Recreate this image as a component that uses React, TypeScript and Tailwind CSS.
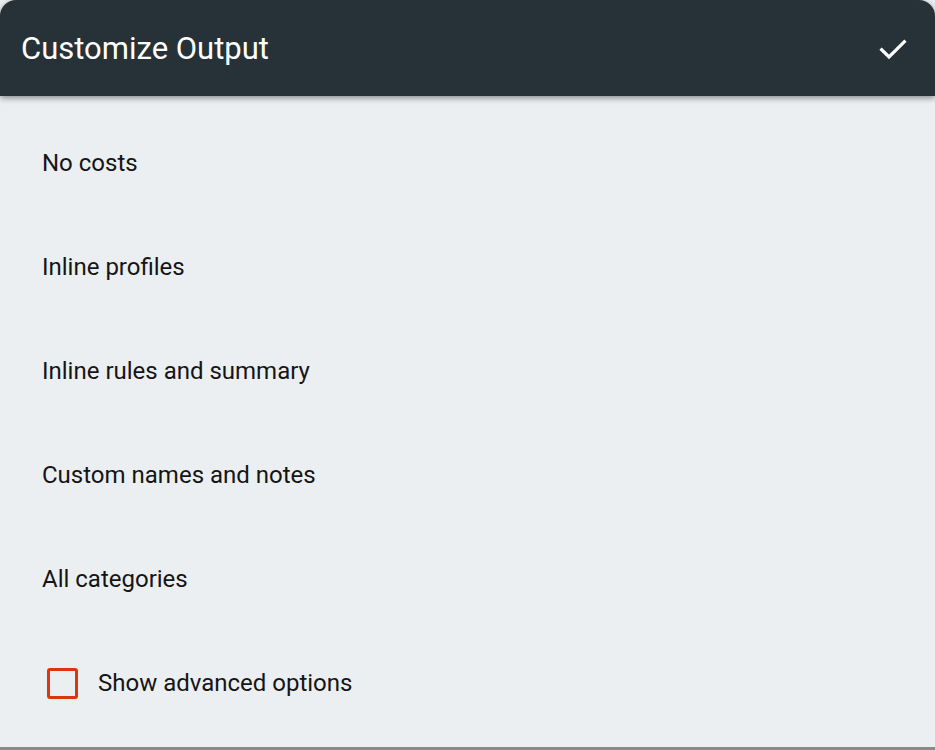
import React from "react";

const items = [
  "No costs",
  "Inline profiles",
  "Inline rules and summary",
  "Custom names and notes",
  "All categories",
];

export default function App() {
  return (
    <div
      className="w-[935px] h-[750px] bg-[#eceff1] flex flex-col overflow-hidden"
      style={{ fontFamily: "Roboto, 'Noto Sans', sans-serif" }}
    >
      <div className="h-[96px] shrink-0 bg-[#263238] rounded-t-[16px] flex items-center justify-between pl-[21px] pr-[26px] shadow-[0_2px_6px_rgba(0,0,0,0.45)] relative z-10">
        <span className="text-white text-[31px] leading-none">Customize Output</span>
        <svg width="32" height="32" viewBox="0 0 24 24" className="mt-[2px]">
          <path d="M3.5 12.5 L9 18 L20.5 6.5" fill="none" stroke="white" strokeWidth="2.4" strokeLinecap="square" />
        </svg>
      </div>
      <div className="flex-1 flex flex-col pt-[15px]">
        {items.map((t) => (
          <div key={t} className="h-[104px] flex items-center pl-[42px] text-[24px] text-[#151515]">
            {t}
          </div>
        ))}
        <div className="h-[104px] flex items-center pl-[47px] gap-[20px] text-[24px] text-[#151515]">
          <div className="w-[31px] h-[31px] border-[3px] border-[#dd3412] rounded-[3px] bg-transparent" />
          <span>Show advanced options</span>
        </div>
      </div>
      <div className="h-[3px] bg-[#8a8a8a] mb-0 shrink-0" />
    </div>
  );
}
